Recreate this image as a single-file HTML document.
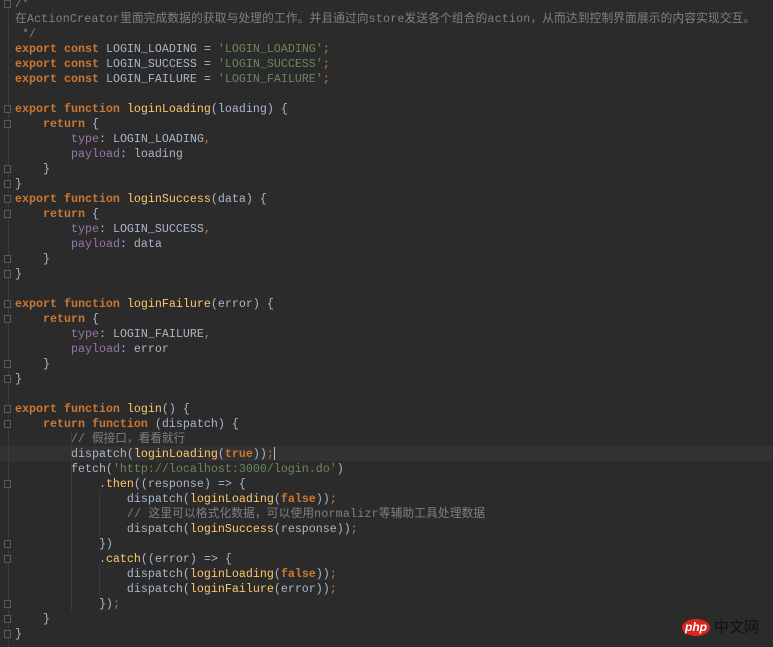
<!DOCTYPE html>
<html><head><meta charset="utf-8"><style>
html,body{margin:0;padding:0;background:#2b2b2b;width:773px;height:647px;overflow:hidden}
#code{position:absolute;left:15px;top:-3px;font-family:"Liberation Mono","Noto Sans CJK SC",monospace;font-size:11.67px;line-height:15px;color:#a9b7c6;white-space:pre}
.k{color:#cc7832;font-weight:bold}
.p{color:#cc7832}
.f{color:#ffc66d}
.s{color:#6a8759}
.c{color:#808080}
.t{color:#9876aa}
.z{letter-spacing:0.18px}
.hl{position:absolute;left:0;top:446px;width:773px;height:15px;background:#323232}
.g{position:absolute;left:8px;top:0;width:1px;height:647px;background:#3a3a3a}
.fm{position:absolute;left:4px;width:7px;height:8px;border:1px solid #5a5a5a;box-sizing:border-box;background:#2b2b2b}
.ig{position:absolute;width:1px;background:#393939}
.cur{position:absolute;left:274px;top:447px;width:1px;height:13px;background:#bbb}
</style></head><body>
<div class="hl"></div>
<div class="g"></div>
<div class="fm" style="top:0px"></div>
<div class="fm" style="top:105px"></div><div class="fm" style="top:120px"></div>
<div class="fm" style="top:165px"></div><div class="fm" style="top:180px"></div>
<div class="fm" style="top:195px"></div><div class="fm" style="top:210px"></div>
<div class="fm" style="top:255px"></div><div class="fm" style="top:270px"></div>
<div class="fm" style="top:300px"></div><div class="fm" style="top:315px"></div>
<div class="fm" style="top:360px"></div><div class="fm" style="top:375px"></div>
<div class="fm" style="top:405px"></div><div class="fm" style="top:420px"></div>
<div class="fm" style="top:480px"></div><div class="fm" style="top:540px"></div>
<div class="fm" style="top:555px"></div><div class="fm" style="top:600px"></div>
<div class="fm" style="top:615px"></div><div class="fm" style="top:630px"></div>
<div class="ig" style="left:71px;top:431px;height:180px"></div>
<div class="ig" style="left:99px;top:491px;height:45px"></div>
<div class="ig" style="left:99px;top:566px;height:30px"></div>
<div class="cur"></div>
<div id="code"><span class="c">/*
<span class="z">在ActionCreator里面完成数据的获取与处理的工作。并且通过向store发送各个组合的action，从而达到控制界面展示的内容实现交互。</span>
 */</span>
<span class="k">export const</span> LOGIN_LOADING = <span class="s">'LOGIN_LOADING'</span><span class="p">;</span>
<span class="k">export const</span> LOGIN_SUCCESS = <span class="s">'LOGIN_SUCCESS'</span><span class="p">;</span>
<span class="k">export const</span> LOGIN_FAILURE = <span class="s">'LOGIN_FAILURE'</span><span class="p">;</span>

<span class="k">export function</span> <span class="f">loginLoading</span>(loading) {
    <span class="k">return</span> {
        <span class="t">type</span>: LOGIN_LOADING<span class="p">,</span>
        <span class="t">payload</span>: loading
    }
}
<span class="k">export function</span> <span class="f">loginSuccess</span>(data) {
    <span class="k">return</span> {
        <span class="t">type</span>: LOGIN_SUCCESS<span class="p">,</span>
        <span class="t">payload</span>: data
    }
}

<span class="k">export function</span> <span class="f">loginFailure</span>(error) {
    <span class="k">return</span> {
        <span class="t">type</span>: LOGIN_FAILURE<span class="p">,</span>
        <span class="t">payload</span>: error
    }
}

<span class="k">export function</span> <span class="f">login</span>() {
    <span class="k">return function</span> (dispatch) {
        <span class="c">// 假接口，看看就行</span>
        dispatch(<span class="f">loginLoading</span>(<span class="k">true</span>))<span class="p">;</span>
        fetch(<span class="s">'http://localhost:3000/login.do'</span>)
            .<span class="f">then</span>((response) =&gt; {
                dispatch(<span class="f">loginLoading</span>(<span class="k">false</span>))<span class="p">;</span>
                <span class="c z">// 这里可以格式化数据，可以使用normalizr等辅助工具处理数据</span>
                dispatch(<span class="f">loginSuccess</span>(response))<span class="p">;</span>
            })
            .<span class="f">catch</span>((error) =&gt; {
                dispatch(<span class="f">loginLoading</span>(<span class="k">false</span>))<span class="p">;</span>
                dispatch(<span class="f">loginFailure</span>(error))<span class="p">;</span>
            })<span class="p">;</span>
    }
}</div>
<div style="position:absolute;left:682px;top:619px;width:28px;height:17px;border-radius:50%;background:#d9261c;color:#fff;font:italic bold 12px 'Liberation Sans',sans-serif;text-align:center;line-height:16px">php</div>
<div style="position:absolute;left:714px;top:618px;color:#111;font:15px 'Noto Sans CJK SC',sans-serif;line-height:18px">中文网</div>
</body></html>
